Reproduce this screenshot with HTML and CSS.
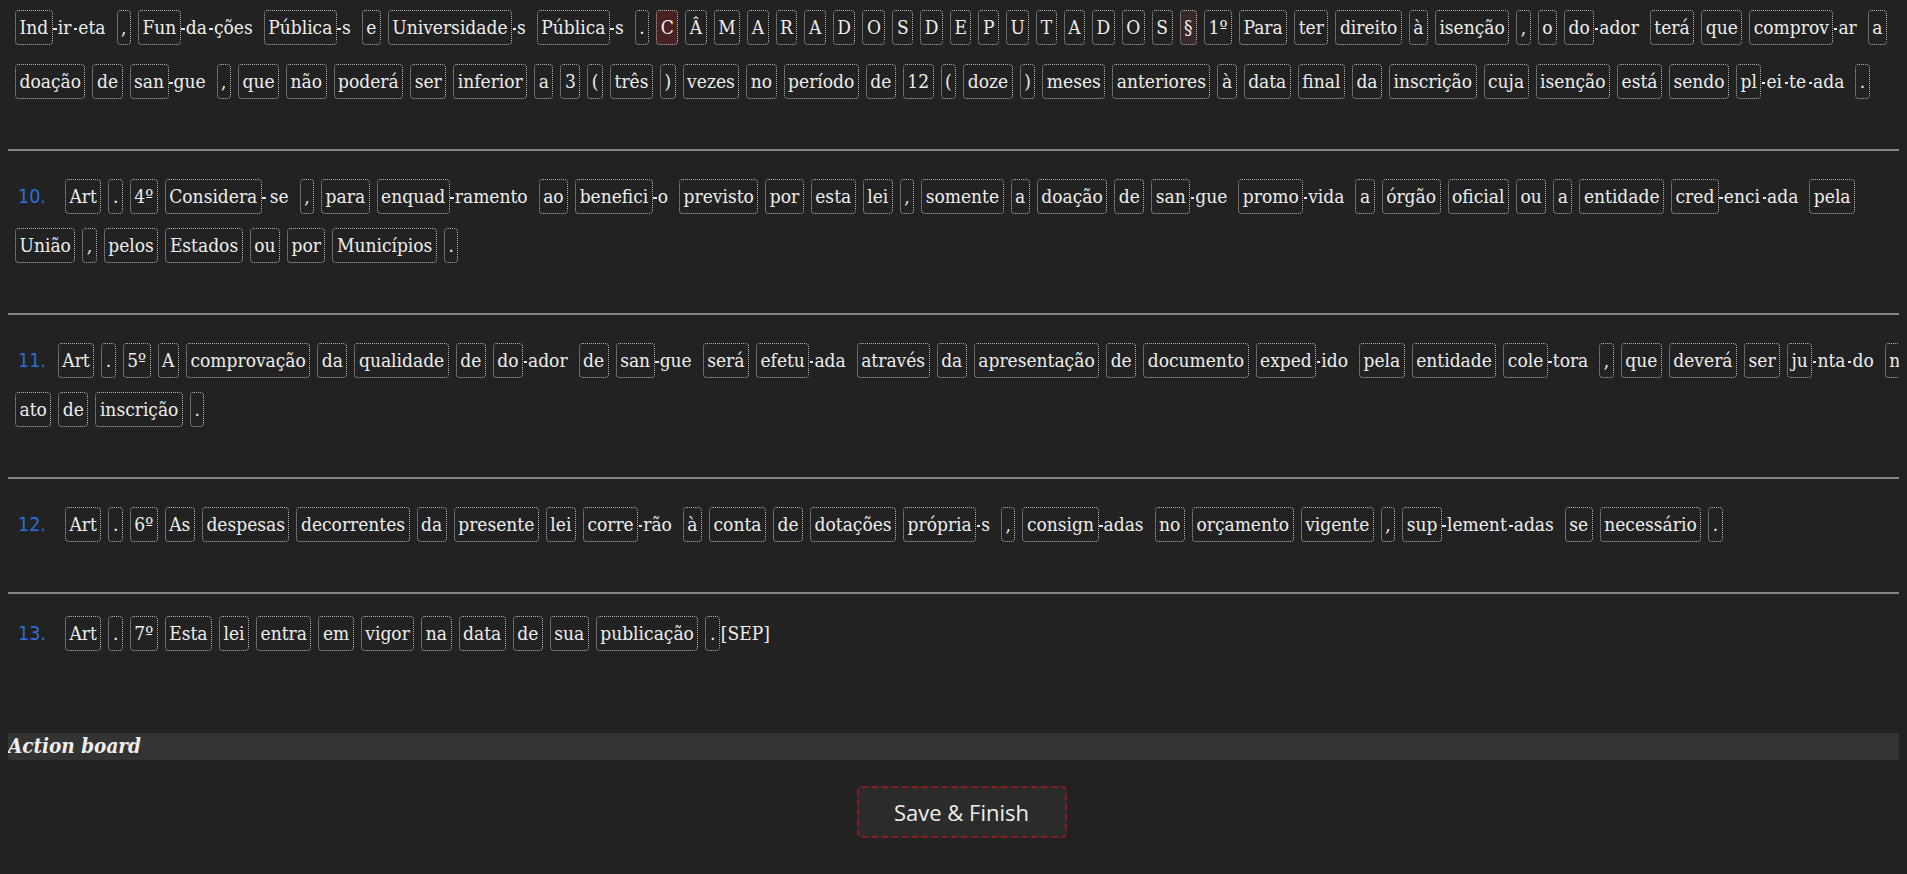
FILE: index.html
```html
<!DOCTYPE html>
<html lang="pt">
<head>
<meta charset="utf-8">
<title>Annotation</title>
<link rel="stylesheet" href="styles.css">
</head>
<body>
<div class="doc">
  <section class="sec first">
    <div class="line">
      <span class="grp"><span class="tok">Ind</span><span class="sub">ir</span><span class="sub">eta</span></span>
      <span class="tok">,</span>
      <span class="grp"><span class="tok">Fun</span><span class="sub">da</span><span class="sub">ções</span></span>
      <span class="grp"><span class="tok">Pública</span><span class="sub">s</span></span>
      <span class="tok">e</span>
      <span class="grp"><span class="tok">Universidade</span><span class="sub">s</span></span>
      <span class="grp"><span class="tok">Pública</span><span class="sub">s</span></span>
      <span class="tok">.</span>
      <span class="tok hl">C</span>
      <span class="tok">Â</span>
      <span class="tok">M</span>
      <span class="tok">A</span>
      <span class="tok">R</span>
      <span class="tok">A</span>
      <span class="tok">D</span>
      <span class="tok">O</span>
      <span class="tok">S</span>
      <span class="tok">D</span>
      <span class="tok">E</span>
      <span class="tok">P</span>
      <span class="tok">U</span>
      <span class="tok">T</span>
      <span class="tok">A</span>
      <span class="tok">D</span>
      <span class="tok">O</span>
      <span class="tok">S</span>
      <span class="tok hl-soft">§</span>
      <span class="tok">1º</span>
      <span class="tok">Para</span>
      <span class="tok">ter</span>
      <span class="tok">direito</span>
      <span class="tok">à</span>
      <span class="tok">isenção</span>
      <span class="tok">,</span>
      <span class="tok">o</span>
      <span class="grp"><span class="tok">do</span><span class="sub">ador</span></span>
      <span class="tok">terá</span>
      <span class="tok">que</span>
      <span class="grp"><span class="tok">comprov</span><span class="sub">ar</span></span>
      <span class="tok">a</span>
    </div>
    <div class="line">
      <span class="tok">doação</span>
      <span class="tok">de</span>
      <span class="grp"><span class="tok">san</span><span class="sub">gue</span></span>
      <span class="tok">,</span>
      <span class="tok">que</span>
      <span class="tok">não</span>
      <span class="tok">poderá</span>
      <span class="tok">ser</span>
      <span class="tok">inferior</span>
      <span class="tok">a</span>
      <span class="tok">3</span>
      <span class="tok">(</span>
      <span class="tok">três</span>
      <span class="tok">)</span>
      <span class="tok">vezes</span>
      <span class="tok">no</span>
      <span class="tok">período</span>
      <span class="tok">de</span>
      <span class="tok">12</span>
      <span class="tok">(</span>
      <span class="tok">doze</span>
      <span class="tok">)</span>
      <span class="tok">meses</span>
      <span class="tok">anteriores</span>
      <span class="tok">à</span>
      <span class="tok">data</span>
      <span class="tok">final</span>
      <span class="tok">da</span>
      <span class="tok">inscrição</span>
      <span class="tok">cuja</span>
      <span class="tok">isenção</span>
      <span class="tok">está</span>
      <span class="tok">sendo</span>
      <span class="grp"><span class="tok">pl</span><span class="sub">ei</span><span class="sub">te</span><span class="sub">ada</span></span>
      <span class="tok">.</span>
    </div>
  </section>

  <section class="sec">
    <div class="line">
      <span class="num">10.</span>
      <span class="tok">Art</span>
      <span class="tok">.</span>
      <span class="tok">4º</span>
      <span class="grp"><span class="tok">Considera</span><span class="sub spaced">se</span></span>
      <span class="tok">,</span>
      <span class="tok">para</span>
      <span class="grp"><span class="tok">enquad</span><span class="sub">ramento</span></span>
      <span class="tok">ao</span>
      <span class="grp"><span class="tok">benefici</span><span class="sub">o</span></span>
      <span class="tok">previsto</span>
      <span class="tok">por</span>
      <span class="tok">esta</span>
      <span class="tok">lei</span>
      <span class="tok">,</span>
      <span class="tok">somente</span>
      <span class="tok">a</span>
      <span class="tok">doação</span>
      <span class="tok">de</span>
      <span class="grp"><span class="tok">san</span><span class="sub">gue</span></span>
      <span class="grp"><span class="tok">promo</span><span class="sub">vida</span></span>
      <span class="tok">a</span>
      <span class="tok">órgão</span>
      <span class="tok">oficial</span>
      <span class="tok">ou</span>
      <span class="tok">a</span>
      <span class="tok">entidade</span>
      <span class="grp"><span class="tok">cred</span><span class="sub">enci</span><span class="sub">ada</span></span>
      <span class="tok">pela</span>
    </div>
    <div class="line">
      <span class="tok">União</span>
      <span class="tok">,</span>
      <span class="tok">pelos</span>
      <span class="tok">Estados</span>
      <span class="tok">ou</span>
      <span class="tok">por</span>
      <span class="tok">Municípios</span>
      <span class="tok">.</span>
    </div>
  </section>

  <section class="sec">
    <div class="line">
      <span class="num">11.</span>
      <span class="tok">Art</span>
      <span class="tok">.</span>
      <span class="tok">5º</span>
      <span class="tok">A</span>
      <span class="tok">comprovação</span>
      <span class="tok">da</span>
      <span class="tok">qualidade</span>
      <span class="tok">de</span>
      <span class="grp"><span class="tok">do</span><span class="sub">ador</span></span>
      <span class="tok">de</span>
      <span class="grp"><span class="tok">san</span><span class="sub">gue</span></span>
      <span class="tok">será</span>
      <span class="grp"><span class="tok">efetu</span><span class="sub">ada</span></span>
      <span class="tok">através</span>
      <span class="tok">da</span>
      <span class="tok">apresentação</span>
      <span class="tok">de</span>
      <span class="tok">documento</span>
      <span class="grp"><span class="tok">exped</span><span class="sub">ido</span></span>
      <span class="tok">pela</span>
      <span class="tok">entidade</span>
      <span class="grp"><span class="tok">cole</span><span class="sub">tora</span></span>
      <span class="tok">,</span>
      <span class="tok">que</span>
      <span class="tok">deverá</span>
      <span class="tok">ser</span>
      <span class="grp"><span class="tok">ju</span><span class="sub">nta</span><span class="sub">do</span></span>
      <span class="tok">no</span>
    </div>
    <div class="line">
      <span class="tok">ato</span>
      <span class="tok">de</span>
      <span class="tok">inscrição</span>
      <span class="tok">.</span>
    </div>
  </section>

  <section class="sec">
    <div class="line">
      <span class="num">12.</span>
      <span class="tok">Art</span>
      <span class="tok">.</span>
      <span class="tok">6º</span>
      <span class="tok">As</span>
      <span class="tok">despesas</span>
      <span class="tok">decorrentes</span>
      <span class="tok">da</span>
      <span class="tok">presente</span>
      <span class="tok">lei</span>
      <span class="grp"><span class="tok">corre</span><span class="sub">rão</span></span>
      <span class="tok">à</span>
      <span class="tok">conta</span>
      <span class="tok">de</span>
      <span class="tok">dotações</span>
      <span class="grp"><span class="tok">própria</span><span class="sub">s</span></span>
      <span class="tok">,</span>
      <span class="grp"><span class="tok">consign</span><span class="sub">adas</span></span>
      <span class="tok">no</span>
      <span class="tok">orçamento</span>
      <span class="tok">vigente</span>
      <span class="tok">,</span>
      <span class="grp"><span class="tok">sup</span><span class="sub">lement</span><span class="sub">adas</span></span>
      <span class="tok">se</span>
      <span class="tok">necessário</span>
      <span class="tok">.</span>
    </div>
  </section>

  <section class="sec last">
    <div class="line">
      <span class="num">13.</span>
      <span class="tok">Art</span>
      <span class="tok">.</span>
      <span class="tok">7º</span>
      <span class="tok">Esta</span>
      <span class="tok">lei</span>
      <span class="tok">entra</span>
      <span class="tok">em</span>
      <span class="tok">vigor</span>
      <span class="tok">na</span>
      <span class="tok">data</span>
      <span class="tok">de</span>
      <span class="tok">sua</span>
      <span class="tok">publicação</span>
      <span class="grp tight"><span class="tok">.</span><span class="plain">[SEP]</span></span>
    </div>
  </section>

  <h2 class="board">Action board</h2>
  <div class="actions">
    <button class="finish" type="button">Save &amp; Finish</button>
  </div>
</div>
</body>
</html>
```

FILE: styles.css
```css
html {
  overflow: hidden;
}

body {
  margin: 8px;
  background: #222222;
  color: #eeeeee;
  font-family: "DejaVu Serif Condensed", "DejaVu Serif", serif;
  font-stretch: condensed;
  font-size: 19px;
}

.doc {
  width: 100vw;
}

.sec {
  padding: 28px 0 50px 7px;
  border-bottom: 2px solid #868686;
}

.sec.first {
  padding-top: 2px;
}

.sec.last {
  padding-top: 22px;
  padding-bottom: 0;
  border-bottom: 0;
}

.line {
  display: flex;
  align-items: center;
  column-gap: 7px;
  white-space: nowrap;
}

.line + .line {
  margin-top: 14px;
}

.sec.first .line + .line {
  margin-top: 19px;
}

.num {
  width: 40px;
  padding-left: 3px;
  font-family: "DejaVu Sans", sans-serif;
  font-stretch: condensed;
  font-size: 19.5px;
  color: #2a6fd6;
}

.tok {
  display: inline-block;
  padding: 4px 3.5px;
  line-height: 25px;
  border: 1px dotted #b4b4b4;
  border-radius: 4px;
}

.tok.hl {
  background: #4a2121;
}

.tok.hl-soft {
  background: #3b2828;
}

.grp {
  display: flex;
  align-items: center;
  padding-right: 2px;
}

.grp.tight {
  padding-right: 0;
}

.sub {
  padding-right: 2px;
  line-height: 25px;
}

.sub::before {
  content: "";
  display: inline-block;
  width: 3.5px;
  height: 2px;
  margin: 0 1px 0 0.5px;
  background: #e6e6e6;
  vertical-align: middle;
}

.sub.spaced::before {
  margin-right: 4px;
}

.plain {
  margin-left: 1px;
  line-height: 25px;
}

.board {
  margin: 82px 0 0;
  height: 27px;
  background: #333333;
  font-size: 20.5px;
  line-height: 27px;
  font-weight: bold;
  font-style: italic;
}

.actions {
  display: flex;
  justify-content: center;
  padding-top: 26px;
}

.finish {
  box-sizing: border-box;
  width: 210px;
  height: 52px;
  border: 2px dashed #8c1c1c;
  border-radius: 5px;
  background: #2b2b2b;
  color: #eeeeee;
  font-family: "Open Sans", "Noto Sans", sans-serif;
  font-size: 22px;
}
```
